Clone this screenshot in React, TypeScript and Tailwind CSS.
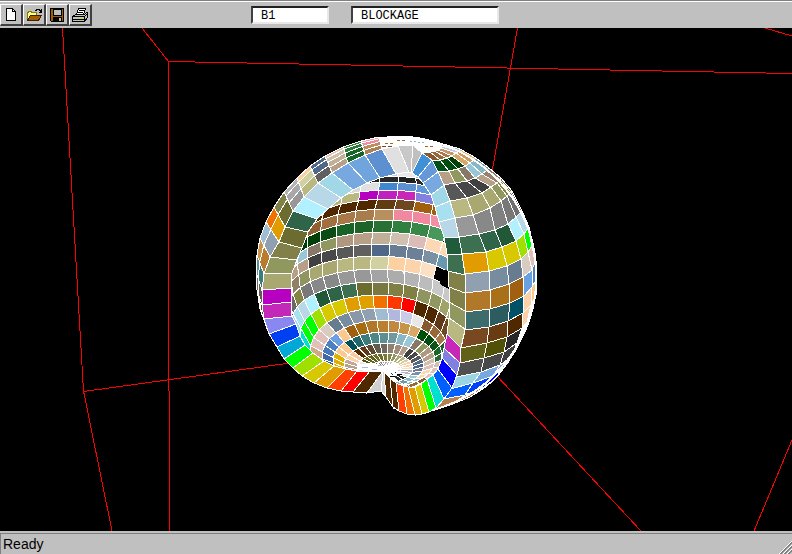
import type { ReactNode } from "react";

type Point = [number, number];

interface Ring {
  cx: number;
  top: number;
  rx: number;
  ry: number;
  phase: number;
}

interface Row {
  start: number;
  colors: string[];
}

const BEAM = "#ffffff";

// Rim of the opening, counter-clockwise from the top: [outer x, outer y, inner x, inner y, fill of the next cell]
const rim: [number, number, number, number, string][] = [
  [382, 149, 396, 174, "#5c90d0"],
  [365, 155, 380, 178, "#70a4dc"],
  [348, 163, 367, 183, "#78a8e0"],
  [332, 173, 353, 190, "#a0d8e8"],
  [318, 183, 341, 198, "#b8d8e8"],
  [304, 197, 328, 209, "#b0f0ff"],
  [293, 211, 317, 219, "#306448"],
  [285, 227, 308, 232, "#6c6c30"],
  [279, 242, 302, 248, "#808048"],
  [270, 257, 297, 260, "#909860"],
  [264, 274, 292, 273, "#a8a870"],
  [262, 290, 291, 288, "#b800c0"],
  [262, 305, 291, 302, "#c428b8"],
  [264, 319, 292, 316, "#8888f0"],
  [269, 334, 296, 324, "#0040f0"],
  [277, 347, 300, 336, "#00a8d8"],
  [284, 359, 305, 345, "#00ff00"],
  [293, 368, 313, 353, "#a0e000"],
  [302, 376, 324, 361, "#d8c800"],
  [314, 383, 334, 366, "#e09c00"],
  [327, 388, 346, 369, "#ff4000"],
  [341, 391, 357, 371, "#ff0000"],
  [353, 392, 370, 371, "#502800"],
  [367, 393, 383, 371, "#d0d0d0"],
  [381, 391, 383, 371, "#d8d8d8"],
  [386, 397, 384, 372, "#502800"],
  [393, 407, 390, 378, "#502800"],
  [399, 411, 396, 383, "#ff4000"],
  [407, 414, 403, 386, "#f07000"],
  [415, 415, 408, 387, "#e09c00"],
  [422, 414, 415, 387, "#d8c800"],
  [429, 412, 421, 384, "#00ff00"],
  [436, 408, 427, 379, "#00e0d0"],
  [444, 399, 433, 375, "#0060ff"],
  [452, 388, 438, 369, "#0000ff"],
  [457, 375, 442, 358, "#8080e0"],
  [460, 363, 444, 348, "#c828b8"],
  [461, 348, 447, 334, "#b8b880"],
  [465, 329, 449, 318, "#909860"],
  [465, 311, 449, 302, "#808048"],
  [465, 293, 449, 287, "#808048"],
  [465, 275, 448, 271, "#3c7050"],
  [462, 254, 447, 254, "#205c3c"],
  [459, 237, 444, 237, "#b8d8e8"],
  [455, 218, 439, 222, "#a8e0f0"],
  [450, 201, 435, 207, "#a0d8e8"],
  [444, 185, 431, 195, "#78a8e0"],
  [438, 172, 423, 183, "#6498d8"],
  [432, 160, 418, 177, "#4090d8"],
  [422, 153, 412, 173, "#c0c0c0"],
  [413, 145, 411, 172, "#c8c8c8"],
  [398, 146, 409, 172, "#e0e0e0"],
];

// Latitude rings of the bowl, from the lip down to the pole
const rings: Ring[] = [
  { cx: 388, top: 171, rx: 90, ry: 40, phase: -5 },
  { cx: 388, top: 176, rx: 92, ry: 42, phase: -5 },
  { cx: 388, top: 182, rx: 94, ry: 44, phase: -5 },
  { cx: 387, top: 190, rx: 96, ry: 45, phase: -5 },
  { cx: 386, top: 199, rx: 98, ry: 46, phase: -5 },
  { cx: 385, top: 209, rx: 99, ry: 46, phase: -6 },
  { cx: 384, top: 220, rx: 99, ry: 46, phase: -6 },
  { cx: 381, top: 232, rx: 96, ry: 44, phase: -5 },
  { cx: 378, top: 244, rx: 93, ry: 40, phase: -4 },
  { cx: 376, top: 256, rx: 90, ry: 38, phase: -3 },
  { cx: 375, top: 269, rx: 87, ry: 38, phase: -3 },
  { cx: 375, top: 282, rx: 83, ry: 38, phase: -2 },
  { cx: 377, top: 295, rx: 77, ry: 39, phase: -3 },
  { cx: 379, top: 308, rx: 69, ry: 43, phase: -4 },
  { cx: 382, top: 320, rx: 60, ry: 36, phase: -5 },
  { cx: 384, top: 332, rx: 51, ry: 28, phase: -6 },
  { cx: 384, top: 343, rx: 40, ry: 22, phase: -6 },
  { cx: 385, top: 353, rx: 28, ry: 15, phase: -6 },
  { cx: 386, top: 361, rx: 15, ry: 8, phase: -6 },
  { cx: 386, top: 367, rx: 3, ry: 2, phase: -5 },
];

const rows: Row[] = [
  { start: -2, colors: ["#e8e8e8", "#b0b4d8", "#c8cce8", "#e8e8e8", "#b0b4d8"] },
  { start: -3, colors: ["#202020", "#202020", "#202020", "#282828", "#202020", "#282828", "#303030"] },
  { start: -3, colors: ["#d8d8d8", "#d8d8d8", "#e0e0e0", "#4088d0", "#5c90d0", "#6098d8", "#6098d8"] },
  { start: -4, colors: ["#b8b480", "#b8b480", "#b8b880", "#b800c0", "#c020c0", "#c828b8", "#8480e0", "#8480e0"] },
  { start: -4, colors: ["#502800", "#502800", "#502800", "#502800", "#603c10", "#704820", "#a06010", "#a06010"] },
  { start: -5, colors: ["#805020", "#906030", "#a07040", "#a87848", "#a87c4c", "#b89060", "#f088a0", "#f088a0", "#f090a4"] },
  { start: -5, colors: ["#003c08", "#004008", "#0c4c14", "#186428", "#1c6428", "#287034", "#308040", "#388848", "#48985c"] },
  { start: -6, colors: ["#90c0d0", "#98c8d8", "#887868", "#909860", "#b09880", "#b8a088", "#c0b098", "#d0c0b0", "#dcbcb8", "#fcd8b4", "#fcd8b4"] },
  { start: -6, colors: ["#b8a088", "#b8a088", "#404040", "#484848", "#585858", "#606060", "#506888", "#687c94", "#6c8098", "#7c90a4", "#6898b0", "#6898b0"] },
  { start: -7, colors: ["#908068", "#908068", "#909460", "#a8a870", "#a8a870", "#b8b880", "#b8b880", "#d0d0a0", "#fcd0a0", "#fcd4ac", "#fce0c4"] },
  { start: -8, colors: ["#484848", "#686868", "#848444", "#787878", "#888888", "#888888", "#989898", "#989898", "#a4a4a4", "#acacac", "#b4b4b4", "#bcbcbc", "#c8c8c8", "#c8c8c8"] },
  { start: -9, colors: ["#98d4e4", "#a0d8e8", "#a8e0f0", "#b8d8e8", "#b0f0ff", "#205838", "#306448", "#3c7050", "#6c6c30", "#787840", "#808044", "#808044", "#909460", "#909860", "#a0a468", "#a8a870"] },
  { start: -10, colors: ["#00d8c8", "#00e0d0", "#00e0d0", "#00ff00", "#00ff00", "#a0e000", "#d8c800", "#d8c800", "#e09c00", "#e0a000", "#f07000", "#ff3800", "#ff0000", "#502800", "#502800", "#603818", "#704820", "#885830", "#986838"] },
  { start: -11, colors: ["#c08850", "#c89868", "#c8a080", "#d0a888", "#e0c0b8", "#e0c0b8", "#d8ccc0", "#687c90", "#788ca0", "#8898a8", "#90a0b0", "#a0bcd0", "#b0b8e0", "#c8cce8", "#e8e8e8", "#885830", "#986838", "#a87848", "#186428", "#286c34", "#307838", "#c0b098", "#d0c0a8", "#e0c0b8", "#885830", "#986838", "#a87848"] },
  { start: -11, colors: ["#38508c", "#38508c", "#3c5c98", "#4068a8", "#4878b8", "#4c80c0", "#6ca0e0", "#fcc890", "#a06010", "#a86c10", "#b07828", "#b88030", "#c08840", "#c89448", "#d8a868", "#005008", "#004c10", "#0c5418", "#186828", "#286c34", "#d0c0b0", "#e0c0b8", "#e0c0b8", "#885830", "#986838", "#a87848", "#b89060"] },
  { start: -11, colors: ["#b89000", "#d8a800", "#e0b000", "#e0b000", "#e0b000", "#fcc890", "#fcc890", "#005058", "#206868", "#3c7c7c", "#4c8888", "#5c9090", "#7098a0", "#88b8c8", "#98c8d8", "#887868", "#909860", "#b09880", "#b8a088", "#d0c0b0", "#e0c0b8", "#fcd8b4", "#fcd8b4", "#98c8d8", "#88b8c8", "#a07040", "#906030"] },
  { start: -11, colors: ["#988070", "#988070", "#a89080", "#b8a090", "#c0a898", "#fcd0a8", "#fcc8a0", "#502800", "#603818", "#604830", "#605c50", "#706860", "#908070", "#a08c78", "#b09c88", "#404040", "#484848", "#585858", "#506888", "#506888", "#687c94", "#7c90a4", "#98c8d8", "#88b8c8", "#7098a0", "#88b8c8", "#98c8d8"] },
  { start: -11, colors: ["#b0b4e0", "#c8cce8", "#e8e8e8", "#ffffff", "#ffffff", "#e8e8e8", "#505010", "#606018", "#606018", "#6c6c28", "#6c6c28", "#787838", "#848444", "#909460", "#a8a870", "#b8b880", "#d0d0a0", "#fcd0a0", "#fcd4ac", "#fce0c4", "#a0b0c0", "#b4b4b4", "#e8e8e8", "#202020", "#303030", "#ffffff", "#202020"] },
  { start: -11, colors: ["#ffffff", "#ffffff", "#c8cce8", "#ffffff", "#ffffff", "#ffffff", "#585858", "#686868", "#787878", "#888888", "#989898", "#a8a8a8", "#b4b4b4", "#c8c8c8", "#ffffff", "#ffffff", "#fcd8b4", "#ffffff", "#fce0c4", "#ffffff", "#c8c8c8", "#ffffff", "#202020", "#ffffff", "#303030", "#ffffff", "#ffffff"] },
];

// Outer wall to the right of the rim: grid lines from the top down, cells run left to right
const wall: Point[][] = [
  [[422, 153], [430, 152], [434, 151], [438, 150], [441, 148], [442, 146], [440, 143]],
  [[432, 160], [440, 160], [447, 158], [452, 156], [456, 153], [459, 151], [460, 149]],
  [[438, 172], [449, 171], [458, 169], [465, 166], [470, 163], [474, 160], [476, 158]],
  [[444, 185], [455, 183], [467, 181], [475, 178], [482, 174], [487, 170], [489, 168]],
  [[450, 201], [467, 198], [482, 193], [491, 187], [497, 183], [500, 180], [501, 178]],
  [[455, 218], [473, 215], [490, 208], [501, 201], [507, 196], [511, 192], [512, 191]],
  [[459, 237], [479, 234], [495, 230], [508, 224], [516, 217], [521, 212], [522, 211]],
  [[462, 254], [486, 252], [502, 247], [516, 241], [524, 234], [528, 228], [529, 227]],
  [[465, 274], [489, 271], [507, 266], [521, 259], [528, 252], [532, 246], [533, 245]],
  [[465, 293], [490, 290], [509, 284], [523, 277], [532, 270], [535, 262], [536, 261]],
  [[465, 312], [490, 309], [510, 303], [524, 296], [532, 287], [536, 280], [537, 278]],
  [[465, 330], [489, 327], [508, 321], [523, 313], [531, 305], [535, 298], [536, 295]],
  [[461, 348], [487, 343], [507, 337], [522, 328], [527, 322], [531, 315], [532, 312]],
  [[460, 363], [484, 358], [504, 352], [517, 343], [523, 335], [526, 328], [527, 326]],
  [[456, 377], [481, 372], [500, 365], [511, 357], [516, 350], [519, 344], [520, 342]],
  [[450, 389], [473, 383], [493, 376], [504, 368], [507, 364], [509, 360], [510, 358]],
  [[444, 399], [465, 395], [484, 387], [495, 379], [497, 377], [498, 375], [499, 374]],
  [[433, 410], [453, 404], [470, 397], [483, 389], [487, 386], [488, 385], [489, 384]],
];

const wallColors: string[][] = [
  ["#885830", "#986838", "#a87848", "#c89868", "#c8cce8", "#b0b8e0"],
  ["#005018", "#004c10", "#004008", "#d8a868", "#d09c58", "#e0b070"],
  ["#b8a088", "#909860", "#887868", "#98c8d8", "#88b8c8", "#70a0a8"],
  ["#585858", "#484848", "#404040", "#b8a088", "#988070", "#908070"],
  ["#b8b880", "#a8a870", "#a8a870", "#909860", "#848444", "#707030"],
  ["#989898", "#888888", "#808080", "#787878", "#707070", "#606060"],
  ["#3c7050", "#306448", "#205838", "#b0f0ff", "#b8d8e8", "#ffffff"],
  ["#e09c00", "#d8c800", "#d8c800", "#a0e000", "#00ff00", "#00ff00"],
  ["#90a0b0", "#788ca0", "#687c90", "#d8ccc0", "#e0c0b8", "#ffffff"],
  ["#b07828", "#a87018", "#a06010", "#68a0e0", "#4880c8", "#ffffff"],
  ["#3c6c6c", "#2c5c60", "#005068", "#fcd0a8", "#fcc890", "#e0b000"],
  ["#784820", "#683c10", "#502800", "#fcd0a8", "#ffffff", "#ffffff"],
  ["#606018", "#505008", "#282828", "#ffffff", "#ffffff", "#ffffff"],
  ["#505050", "#484848", "#404040", "#ffffff", "#c8c8c8", "#ffffff"],
  ["#98d4e4", "#78a8e0", "#78a8e0", "#c8e8f0", "#ffffff", "#ffffff"],
  ["#0060ff", "#0040f8", "#0000ff", "#0000ff", "#ffffff", "#ffffff"],
  ["#b88050", "#b07848", "#3c5890", "#ffffff", "#ffffff", "#ffffff"],
];

// Silhouette behind the left part of the rim, one point per rim point
const backEdge: Point[] = [
  [379, 137], [361, 141], [343, 147], [325, 156], [310, 166], [297, 178], [284, 192],
  [274, 207], [266, 222], [260, 238], [257, 255], [256, 272], [257, 290], [260, 309], [269, 334],
];

const backColors: string[][] = [
  ["#b08050", "#b89060", "#f088a0", "#f8a0b0"],
  ["#186428", "#186428", "#307838", "#308040"],
  ["#b8a088", "#c0b098", "#d0c0a8", "#e0c0b8"],
  ["#606060", "#506888", "#506888"],
  ["#b8b880", "#d0d0a0", "#fcd0a0"],
  ["#989898", "#a8a8a8", "#b4b4b4"],
  ["#6c6c30", "#808048"],
  ["#e09c00", "#f07000"],
  ["#90a0b0", "#a0bcd0"],
  ["#b87c30", "#c89448"],
  ["#3c7c7c", "#5c9090"],
  ["#605c50", "#706860"],
  ["#505010", "#606018"],
  ["#787878", "#ffffff"],
];

const STEP = 360 / 32;

function ringPoint(ring: Ring, column: number): Point {
  const angle = ((column * STEP + ring.phase) * Math.PI) / 180;
  return [ring.cx + ring.rx * Math.sin(angle), ring.top + ring.ry - ring.ry * Math.cos(angle)];
}

function lerp(a: Point, b: Point, t: number): Point {
  return [a[0] + (b[0] - a[0]) * t, a[1] + (b[1] - a[1]) * t];
}

function toPoints(points: Point[]) {
  return points.map(([x, y]) => `${x.toFixed(1)},${y.toFixed(1)}`).join(" ");
}

function Cell({ points, fill }: { points: Point[]; fill: string }) {
  return <polygon points={toPoints(points)} fill={fill} stroke={BEAM} strokeWidth={1} />;
}

function Bowl() {
  return (
    <g clipPath="url(#opening)">
      {rows.map((row, r) =>
        row.colors.map((fill, i) => {
          const c = row.start + i;
          const a = rings[r];
          const b = rings[r + 1];
          return (
            <Cell
              key={`${r}-${c}`}
              fill={fill}
              points={[ringPoint(a, c), ringPoint(a, c + 1), ringPoint(b, c + 1), ringPoint(b, c)]}
            />
          );
        }),
      )}
      <polygon points="444,270 450,270 450,290 440,284" fill="#000000" />
      <polygon points="357,369 360,364 374,363 386,367 398,364 396,371 390,374 370,372" fill={BEAM} />
      <path d="M362 367.5h6M372 369.5h5M378 365.5h4" stroke="#b0b4e0" fill="none" />
      <path d="M390 376.5h5M397 374.5h5" stroke="#000000" fill="none" />
    </g>
  );
}

function Wall() {
  return (
    <g>
      <path d="M361 141A140 140 0 0 1 397 136A140 140 0 0 1 537 276A140 140 0 0 1 433 411L444 399L457 375L465 329V275L455 218L444 185L422 153L398 148L365 155Z" fill={BEAM} />
      {wallColors.map((colors, r) =>
        colors.map((fill, c) => (
          <Cell key={`${r}-${c}`} fill={fill} points={[wall[r][c], wall[r][c + 1], wall[r + 1][c + 1], wall[r + 1][c]]} />
        )),
      )}
      <path d="M385 143.5h8M397 140.5h10M425 146.5h8" stroke="#a06828" strokeDasharray="3 2" />
      <path d="M382 146.5h12" stroke="#704820" strokeDasharray="4 2" />
      <path d="M410 141l14 2" stroke="#88b8c8" strokeDasharray="2 2" />
      <path d="M397 136.5A140 140 0 0 1 536.5 276A140 140 0 0 1 433 410" fill="none" stroke={BEAM} strokeWidth={2} />
    </g>
  );
}

function BackEdge() {
  return (
    <g>
      {backColors.map((colors, i) => {
        const a: Point = [rim[i][0], rim[i][1]];
        const b: Point = [rim[i + 1][0], rim[i + 1][1]];
        return colors.map((fill, k) => {
          // cells get narrower towards the silhouette
          const t0 = 1 - (1 - k / colors.length) ** 1.4;
          const t1 = 1 - (1 - (k + 1) / colors.length) ** 1.4;
          return (
            <Cell
              key={`${i}-${k}`}
              fill={fill}
              points={[lerp(a, backEdge[i], t0), lerp(b, backEdge[i + 1], t0), lerp(b, backEdge[i + 1], t1), lerp(a, backEdge[i], t1)]}
            />
          );
        });
      })}
    </g>
  );
}

function Rim() {
  return (
    <g>
      {rim.map(([ox, oy, ix, iy, fill], i) => {
        const [nox, noy, nix, niy] = rim[(i + 1) % rim.length];
        return <Cell key={i} fill={fill} points={[[ox, oy], [nox, noy], [nix, niy], [ix, iy]]} />;
      })}
    </g>
  );
}

function Viewport() {
  return (
    <main className="min-h-0 flex-1 bg-black">
      <svg
        className="block h-full w-full"
        viewBox="0 28 792 503"
        preserveAspectRatio="xMidYMid slice"
        shapeRendering="crispEdges"
        role="img"
        aria-label="Blockage mesh"
      >
        <defs>
          <clipPath id="opening">
            <polygon points={toPoints(rim.map(([, , x, y]) => [x, y] as Point))} />
          </clipPath>
        </defs>
        <g fill="none" stroke="#ff0000">
          <path d="M62.5 28L83.5 391L112 531M83.5 391.5L290 363" />
          <path d="M142 28L168.5 61.5L792 73.5M168.5 61.5V391" />
          <path d="M517.5 28L492 172M765 28L792 36M792 440L754 531" />
          <path d="M169.5 391V531M497 376L641 531" />
        </g>
        <Wall />
        <BackEdge />
        <Bowl />
        <Rim />
      </svg>
    </main>
  );
}

function ToolButton({ label, children }: { label: string; children: ReactNode }) {
  return (
    <button
      type="button"
      aria-label={label}
      className="flex h-[22px] w-[23px] items-center justify-center border-t border-r-2 border-b-2 border-l border-t-white border-r-[#404040] border-b-[#404040] border-l-white bg-[#c0c0c0]"
    >
      <svg width="18" height="16" viewBox="0 0 18 16" shapeRendering="crispEdges">
        {children}
      </svg>
    </button>
  );
}

function Toolbar() {
  return (
    <header className="flex h-7 shrink-0 items-center border-t border-[#808080] bg-[#c0c0c0]">
      <div className="flex h-full w-full items-center border-t border-white">
        <div className="flex">
          <ToolButton label="New">
            <path d="M4.5 1.5h6l3 3v9h-9z" fill="#ffffff" stroke="#000000" />
            <path d="M10.5 1.5v3h3" fill="none" stroke="#000000" />
          </ToolButton>
          <ToolButton label="Open">
            <path d="M2.5 13V5.5h1v-1h3v1h5v3" fill="#ffff80" stroke="#808000" />
            <path d="M2.5 13.5l3-5h11l-3 5z" fill="#a06000" stroke="#402000" />
            <path d="M10 3.5h1v-1h3v1h1v1h1M16.5 2v3.5h-3" fill="none" stroke="#000000" />
          </ToolButton>
          <ToolButton label="Save">
            <path d="M2.5 1.5h13v13h-12l-1-1z" fill="#a06000" stroke="#000000" />
            <path d="M5 2h8v6H5z" fill="#c0c0c0" stroke="#000000" />
            <path d="M5 10h9v5H5z" fill="#000000" />
            <path d="M11 11h2v3h-2z" fill="#c0c0c0" />
          </ToolButton>
          <ToolButton label="Print">
            <path d="M5.5 7.5l2-6h7l-2 6z" fill="#ffffff" stroke="#000000" />
            <path d="M8 3.5h5M7 5.5h5" stroke="#000000" />
            <path d="M1.5 9.5l3-2h9l2-2h1v5l-3 4h-12z" fill="#c0c0c0" stroke="#000000" />
            <path d="M2 9.5h11.5l3-3M13.5 9.5v5M2 12.5h11" fill="none" stroke="#000000" />
            <path d="M8 11h4v1H8z" fill="#e0e000" />
          </ToolButton>
        </div>
        <input
          aria-label="Object id"
          defaultValue="B1"
          className="ml-[159px] h-[18px] w-[78px] border-2 border-t-[#202020] border-r-[#e8e8e8] border-b-[#e8e8e8] border-l-[#404040] bg-white pt-0.5 pl-2 font-['Liberation_Mono',monospace] text-xs text-black outline-none"
        />
        <input
          aria-label="Object type"
          defaultValue="BLOCKAGE"
          className="ml-[22px] h-[18px] w-[148px] border-2 border-t-[#202020] border-r-[#e8e8e8] border-b-[#e8e8e8] border-l-[#404040] bg-white pt-0.5 pl-2 font-['Liberation_Mono',monospace] text-xs text-black outline-none"
        />
      </div>
    </header>
  );
}

function StatusBar() {
  return (
    <footer className="flex h-[23px] shrink-0 items-stretch border-t-2 border-[#c0c0c0] bg-[#c0c0c0]">
      <div className="flex flex-1 items-center justify-between border-t border-l border-[#808080] pl-0.5">
        <span className="font-['Liberation_Sans',sans-serif] text-sm text-black">Ready</span>
        <svg className="self-end" width="13" height="13" viewBox="0 0 13 13" shapeRendering="crispEdges">
          <path d="M0 13L13 0M4 13L13 4M8 13L13 8" stroke="#ffffff" />
          <path d="M1 13L13 1M2 13L13 2M5 13L13 5M6 13L13 6M9 13L13 9M10 13L13 10" stroke="#808080" />
        </svg>
      </div>
    </footer>
  );
}

export default function App() {
  return (
    <div className="flex h-screen flex-col overflow-hidden bg-[#c0c0c0]">
      <Toolbar />
      <Viewport />
      <StatusBar />
    </div>
  );
}
